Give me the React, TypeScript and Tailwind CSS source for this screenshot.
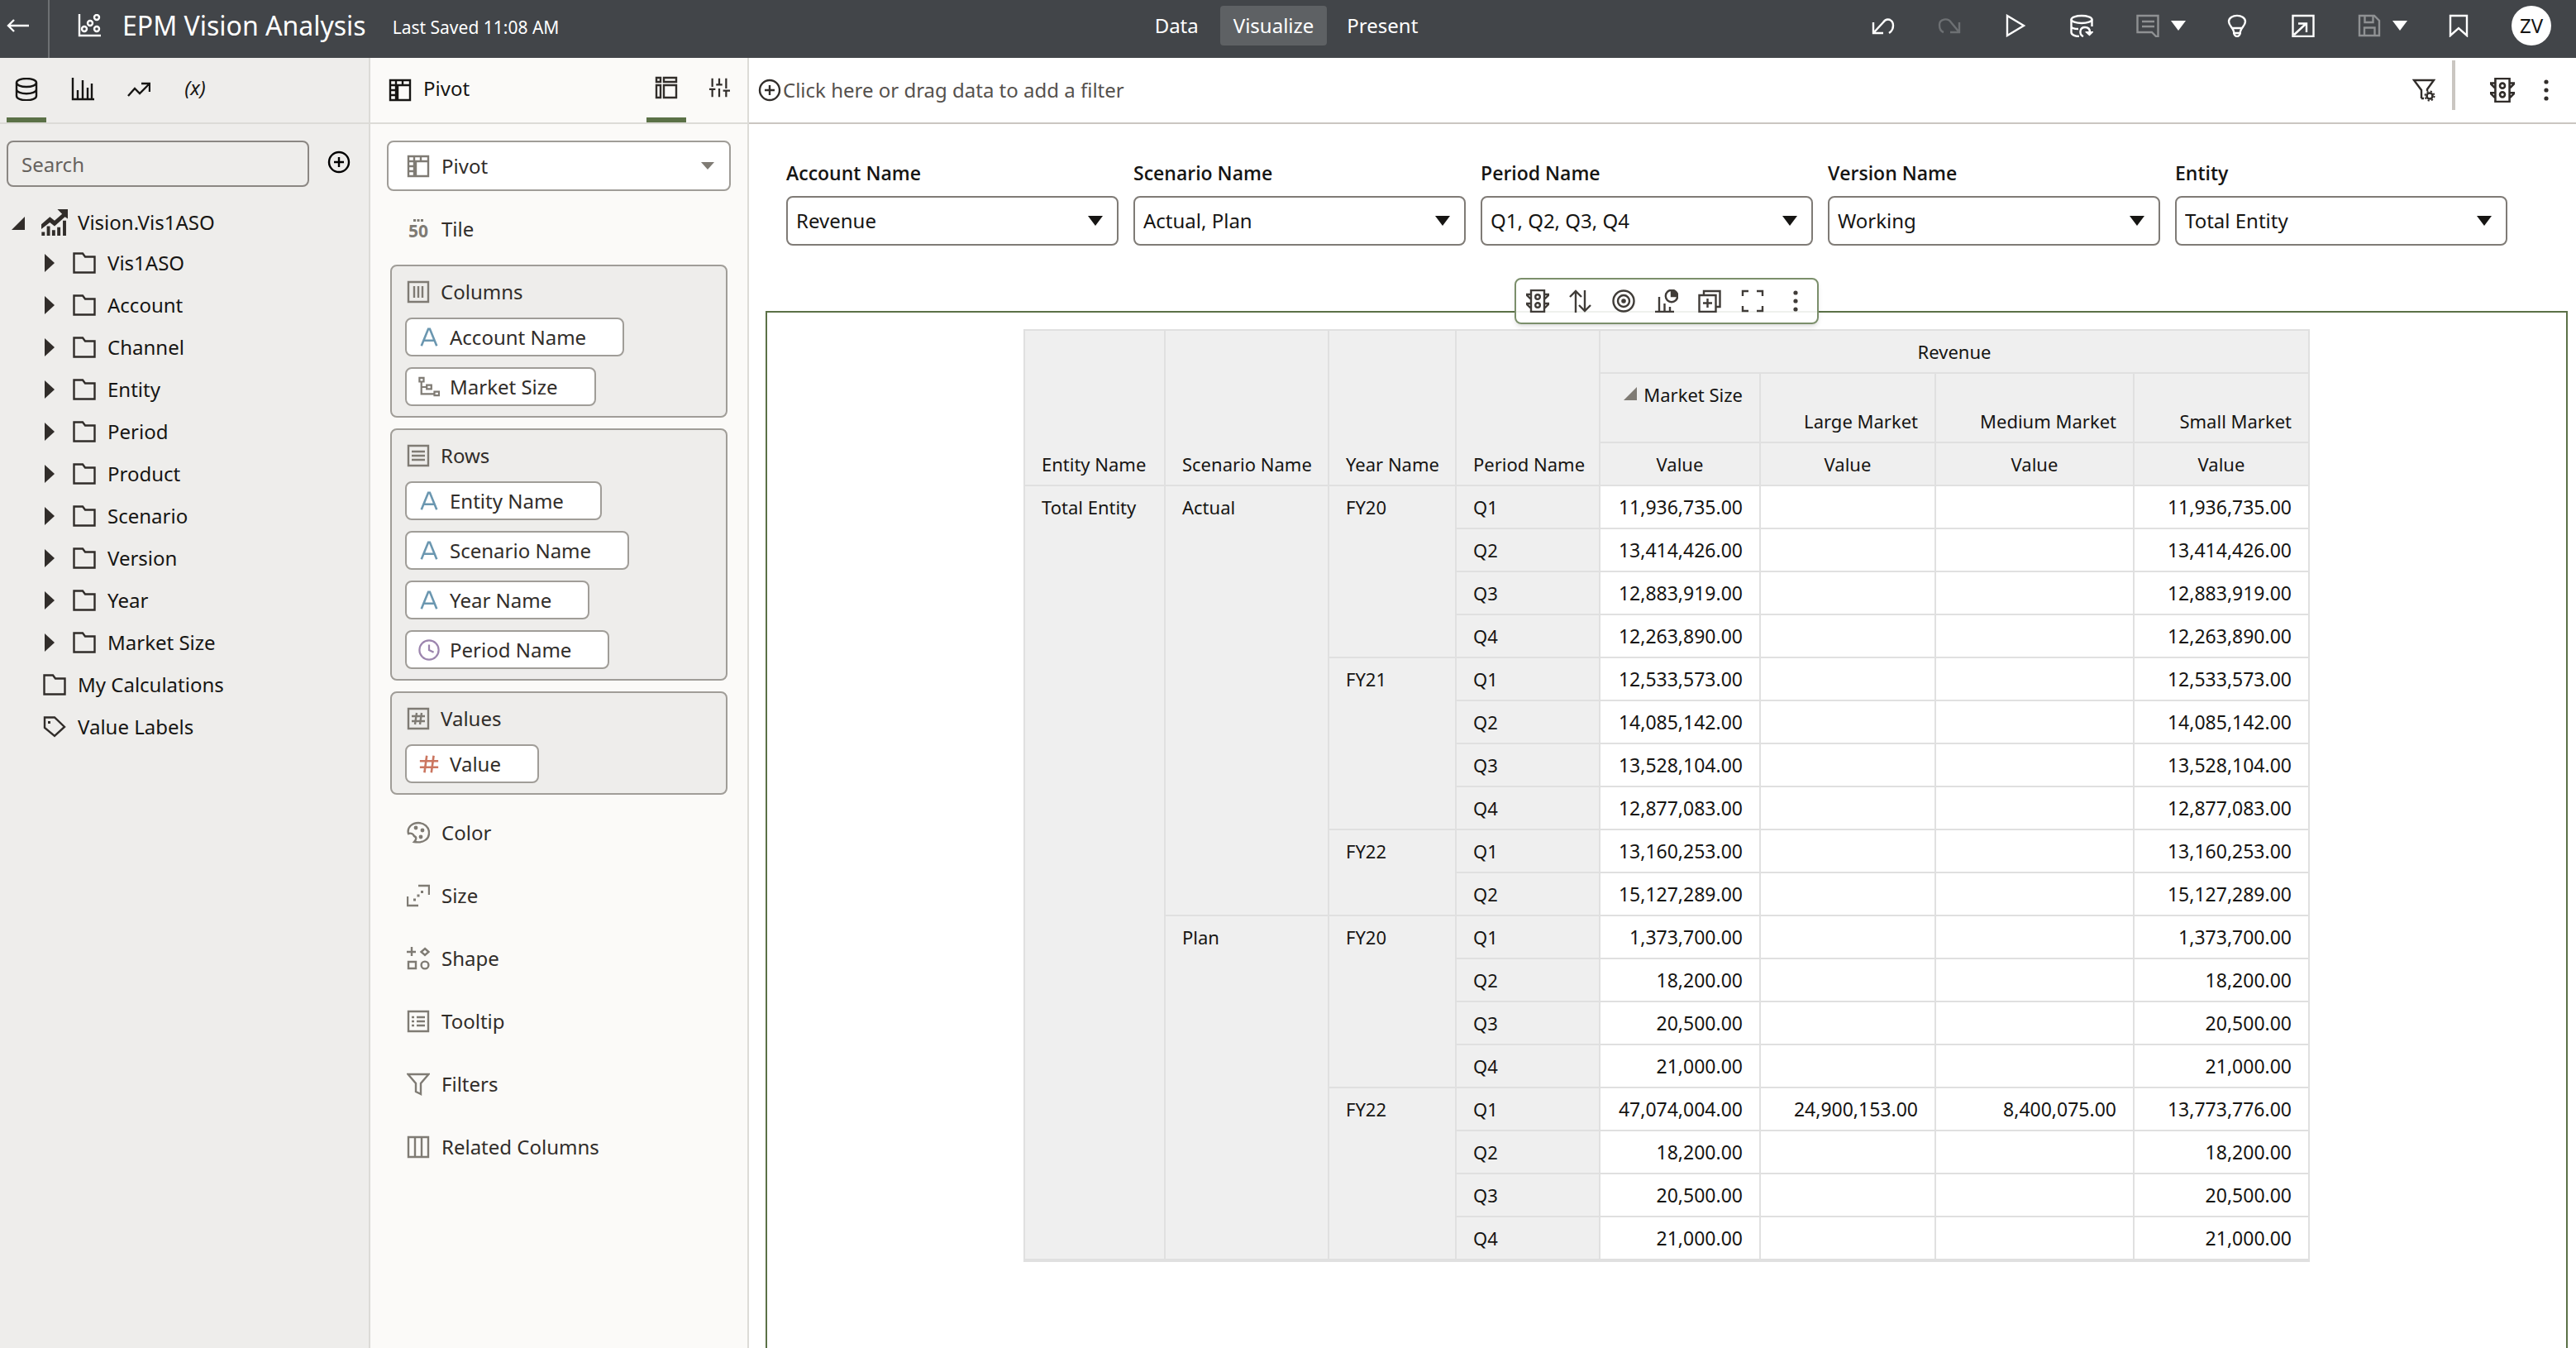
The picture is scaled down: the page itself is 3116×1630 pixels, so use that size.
import type { ReactNode } from "react";

type IconProps = { children: ReactNode; className?: string; size?: number };

function Icon({ children, className = "", size = 28 }: IconProps) {
  return (
    <svg
      width={size}
      height={size}
      viewBox="0 0 28 28"
      fill="none"
      stroke="currentColor"
      strokeWidth="2.4"
      className={`shrink-0 ${className}`}
      aria-hidden="true"
    >
      {children}
    </svg>
  );
}

const icons = {
  back: <path d="M27 14H2M9 7L2 14L9 21" />,
  scatter: (
    <>
      <path d="M2 0V26H28" />
      <circle cx="8" cy="18" r="3" />
      <circle cx="15" cy="11" r="3" />
      <circle cx="23" cy="4" r="3" />
      <circle cx="23" cy="18" r="3" />
    </>
  ),
  undo: <path d="M2 10V23H14M2 23L14 10C18 4 26 6 26 14C26 18 24 21 21 23" />,
  redo: <path d="M26 10V22H15M26 22L16 10C12 4 2 6 2 13C2 18 4 21 7 22" />,
  play: <path d="M4 2L24 14L4 26Z" />,
  refreshData: (
    <>
      <ellipse cx="14" cy="6.500" rx="12.500" ry="4.500" />
      <path d="M1.500 6.500V22C1.500 25 6 27 11 27M26.500 6.500V15M1.500 15C2 17 6 18 10 18" />
      <path d="M16 27C11 25 11 16 18 16C22 16 24 18 24 22" />
      <path d="M18.500 21H28V22L23.500 26.500L18.500 22Z" fill="currentColor" stroke="none" />
    </>
  ),
  comment: <path d="M1.500 2H26.500V27H24L19 22H1.500ZM7 9H22M7 15H22" />,
  bulb: (
    <path d="M10 21C9 16 4 14 4 9C4 -0.500 24 -0.500 24 9C24 14 19 16 18 21C18 29 10 29 10 21ZM7.500 17H20.500M9 23H19" />
  ),
  open: <path d="M1.500 2H26.500V27H1.500ZM3 25L17 12M8 11.500H18V22" />,
  save: <path d="M2 2H20L26 8V26H2ZM8.500 2V10H18.500V2M8 26V16.500H20.500V26" />,
  bookmark: <path d="M4 2H24V26L14 17L4 26Z" />,
  database: (
    <>
      <ellipse cx="14" cy="6" rx="12" ry="5" />
      <path d="M2 6V22C2 29 26 29 26 22V6M2 14C2 21 26 21 26 14" />
    </>
  ),
  bars: <path d="M2 0V26H28M8 26V15M14 26V3M20 26V12M25 26V7" />,
  trend: <path d="M1 22L9 13L15 19L26 8M17 7H27V17" />,
  pivot: (
    <path d="M2 2H26V26H2ZM9 2V26M2 8H26M17 2V8M2 14H9M2 20H9M11 9V26" />
  ),
  grammar: <path d="M2 2H7V7H2ZM11 2H26V7H11ZM2 11H7V26H2ZM11 11H26V26H11Z" />,
  sliders: (
    <path d="M5 2V13M5 17V26M1 16H9M14 2V9M14 15V26M10 10H18M23 2V15M23 19V26M19 18H28" />
  ),
  addCircle: (
    <>
      <circle cx="14" cy="14" r="12" />
      <path d="M14 8V20M8 14H20" />
    </>
  ),
  folder: <path d="M1.500 2.500H12L15 6.500H26.500V25.500H1.500Z" />,
  tag: (
    <>
      <path d="M2 2.500H14L26 14L14 25L2 15Z" />
      <rect x="6" y="7" width="3" height="3" fill="currentColor" stroke="none" />
    </>
  ),
  cube: (
    <>
      <path d="M0 16L9 8L14 12L22 5L17 0H28V10L25 8L14 18L9 14L0 21Z" fill="currentColor" stroke="none" />
      <path d="M2 28V24M7.500 28V18M13 28V22M18.500 28V19M24.500 28V12" strokeWidth="3.400" />
    </>
  ),
  columns: <path d="M2 2H26V26H2ZM9 7V21M14 7V21M19 7V21" />,
  rows: <path d="M2 2H26V26H2ZM6 9H22M6 14H22M6 19H22" />,
  values: <path d="M2 2H26V26H2ZM12 7L10 21M18 7L16 21M6 11H22M6 17H22" />,
  attribute: <path d="M4 25L13 3H15L24 25M7 18H21" strokeWidth="2.800" />,
  hierarchy: (
    <path d="M1.500 2H7V7H1.500ZM11 11.500H17V16.500H11ZM21 20H27V25H21ZM4 7V23H21M4 14H11" />
  ),
  clock: (
    <>
      <circle cx="14" cy="14" r="12.500" />
      <path d="M14 7V14L20 17" />
    </>
  ),
  hash: <path d="M11 3L8 25M20 3L17 25M2 10H26M2 18H26" strokeWidth="2.800" />,
  palette: (
    <>
      <path d="M2 15C0 7 7 2 14 2C21 2 27 7 27 14C27 21 21 27 9 25C12 22 12 19 9 18C8 15 5 14 2 15Z" />
      <g fill="currentColor" stroke="none">
        <circle cx="11" cy="8" r="2.400" />
        <circle cx="19" cy="11" r="2.400" />
        <circle cx="17" cy="19" r="2.400" />
      </g>
    </>
  ),
  size: (
    <>
      <path d="M14 2H27V13M1 15V26H14" />
      <path d="M8 19H11M12.500 14H15.500M17 9.500H20" strokeWidth="2.800" />
    </>
  ),
  shape: (
    <>
      <path d="M6 0V11M0 6H11M2 18H11V26H2ZM22 2L26.500 6L22 10L17.500 6Z" />
      <circle cx="22" cy="22" r="4.400" />
    </>
  ),
  tooltip: <path d="M2 2H26V26H2ZM6 9H9M12 9H22M6 14H9M12 14H22M6 19H9M12 19H22" />,
  filter: <path d="M1.500 2H26.500L17 13V26L11 23V13Z" />,
  related: <path d="M2 2H26V26H2ZM10 2V26M18 2V26" />,
  filterGear: (
    <>
      <path d="M11 24V14L2 2H26L18 13V15M11 24H14" />
      <circle cx="21" cy="21" r="3.500" strokeWidth="2.600" />
      <circle cx="21" cy="21" r="5.600" strokeDasharray="2.200 2.200" strokeWidth="1.800" />
    </>
  ),
  traffic: (
    <>
      <path d="M6 1H22V27H6ZM6 12L1 7V6H6M22 12L27 7V6H22M6 23L1 18V17H6M22 23L27 18V17H22" />
      <circle cx="14" cy="9" r="2.800" />
      <circle cx="14" cy="19" r="2.800" />
    </>
  ),
  more: (
    <g fill="currentColor" stroke="none">
      <circle cx="14" cy="4" r="2.600" />
      <circle cx="14" cy="14" r="2.600" />
      <circle cx="14" cy="24" r="2.600" />
    </g>
  ),
  sort: <path d="M8 28V3M1 9L8 2L15 9M19 1V26M12 19L19 26L26 19" />,
  target: (
    <>
      <circle cx="14" cy="14" r="12.500" />
      <circle cx="14" cy="14" r="7" />
      <circle cx="14" cy="14" r="2.800" fill="currentColor" stroke="none" />
    </>
  ),
  explain: (
    <>
      <path d="M0 27H23M5 27V9M11.500 27V17M18 27V21" />
      <circle cx="20" cy="8" r="7.200" />
      <path d="M20 8V1C24 1 27 4 27 8Z" fill="currentColor" />
    </>
  ),
  duplicate: <path d="M1.500 7H21.500V27H1.500ZM7 7V2H26.500V21H21.500M11.500 11V22M6 16.500H17" />,
  expand: <path d="M2 8V2H9M19 2H26V8M26 20V26H19M9 26H2V20" />,
};

type IconName = keyof typeof icons;

const dimensions = [
  "Vis1ASO",
  "Account",
  "Channel",
  "Entity",
  "Period",
  "Product",
  "Scenario",
  "Version",
  "Year",
  "Market Size",
];

type Chip = { label: string; icon: IconName; color: string };

const dropZones: { title: string; icon: IconName; chips: Chip[] }[] = [
  {
    title: "Columns",
    icon: "columns",
    chips: [
      { label: "Account Name", icon: "attribute", color: "text-[#6b97b0]" },
      { label: "Market Size", icon: "hierarchy", color: "text-[#7f7b74]" },
    ],
  },
  {
    title: "Rows",
    icon: "rows",
    chips: [
      { label: "Entity Name", icon: "attribute", color: "text-[#6b97b0]" },
      { label: "Scenario Name", icon: "attribute", color: "text-[#6b97b0]" },
      { label: "Year Name", icon: "attribute", color: "text-[#6b97b0]" },
      { label: "Period Name", icon: "clock", color: "text-[#9c85ae]" },
    ],
  },
  {
    title: "Values",
    icon: "values",
    chips: [{ label: "Value", icon: "hash", color: "text-[#cb7660]" }],
  },
];

const grammarItems: { label: string; icon: IconName }[] = [
  { label: "Color", icon: "palette" },
  { label: "Size", icon: "size" },
  { label: "Shape", icon: "shape" },
  { label: "Tooltip", icon: "tooltip" },
  { label: "Filters", icon: "filter" },
  { label: "Related Columns", icon: "related" },
];

const dashboardFilters = [
  { id: "account", label: "Account Name", value: "Revenue" },
  { id: "scenario", label: "Scenario Name", value: "Actual, Plan" },
  { id: "period", label: "Period Name", value: "Q1, Q2, Q3, Q4" },
  { id: "version", label: "Version Name", value: "Working" },
  { id: "entity", label: "Entity", value: "Total Entity" },
];

const vizTools: { label: string; icon: IconName }[] = [
  { label: "Conditional formatting", icon: "traffic" },
  { label: "Sort", icon: "sort" },
  { label: "Use as filter", icon: "target" },
  { label: "Change visualization", icon: "explain" },
  { label: "Duplicate", icon: "duplicate" },
  { label: "Maximize", icon: "expand" },
  { label: "Menu", icon: "more" },
];

type Row = {
  scenario?: { name: string; span: number };
  year?: { name: string; span: number };
  period: string;
  values: [string, string, string, string];
};

const small = (v: string): [string, string, string, string] => [v, "", "", v];

const rows: Row[] = [
  { scenario: { name: "Actual", span: 10 }, year: { name: "FY20", span: 4 }, period: "Q1", values: small("11,936,735.00") },
  { period: "Q2", values: small("13,414,426.00") },
  { period: "Q3", values: small("12,883,919.00") },
  { period: "Q4", values: small("12,263,890.00") },
  { year: { name: "FY21", span: 4 }, period: "Q1", values: small("12,533,573.00") },
  { period: "Q2", values: small("14,085,142.00") },
  { period: "Q3", values: small("13,528,104.00") },
  { period: "Q4", values: small("12,877,083.00") },
  { year: { name: "FY22", span: 2 }, period: "Q1", values: small("13,160,253.00") },
  { period: "Q2", values: small("15,127,289.00") },
  { scenario: { name: "Plan", span: 8 }, year: { name: "FY20", span: 4 }, period: "Q1", values: small("1,373,700.00") },
  { period: "Q2", values: small("18,200.00") },
  { period: "Q3", values: small("20,500.00") },
  { period: "Q4", values: small("21,000.00") },
  {
    year: { name: "FY22", span: 4 },
    period: "Q1",
    values: ["47,074,004.00", "24,900,153.00", "8,400,075.00", "13,773,776.00"],
  },
  { period: "Q2", values: small("18,200.00") },
  { period: "Q3", values: small("20,500.00") },
  { period: "Q4", values: small("21,000.00") },
];

function IconButton({
  icon,
  label,
  className = "",
  size,
  disabled,
}: {
  icon: IconName;
  label: string;
  className?: string;
  size?: number;
  disabled?: boolean;
}) {
  return (
    <button type="button" aria-label={label} disabled={disabled} className={`flex items-center justify-center ${className}`}>
      <Icon size={size}>{icons[icon]}</Icon>
    </button>
  );
}

function Caret({ className = "" }: { className?: string }) {
  return (
    <svg width="18" height="12" viewBox="0 0 18 12" fill="currentColor" className={className} aria-hidden="true">
      <path d="M0 0H18L9 12Z" />
    </svg>
  );
}

function Header() {
  return (
    <header className="flex h-[70px] shrink-0 items-center justify-between bg-[#424549] text-white">
      <div className="flex flex-1 items-center self-stretch">
        <div className="flex w-[60px] items-center self-stretch border-r-2 border-[#6d7073] pb-2 pl-2">
          <IconButton icon="back" label="Go back" />
        </div>
        <Icon className="ml-[34px] -mt-2">{icons.scatter}</Icon>
        <h1 className="ml-[26px] pb-2 text-[32px] leading-10">EPM Vision Analysis</h1>
        <span className="ml-8 pb-1 text-[21px] leading-8">Last Saved 11:08 AM</span>
      </div>
      <nav className="flex items-center pb-2 pl-6 text-2xl">
        <button type="button" className="px-[26px] py-2">Data</button>
        <button type="button" className="rounded bg-[#5e6164] px-4 py-2">Visualize</button>
        <button type="button" className="px-6 py-2">Present</button>
      </nav>
      <div className="flex flex-1 items-center justify-end pr-[30px] pb-2">
        <div className="flex items-center gap-[52px]">
          <IconButton icon="undo" label="Undo" />
          <IconButton icon="redo" label="Redo" className="text-[#6d7073]" disabled />
          <IconButton icon="play" label="Preview" />
          <IconButton icon="refreshData" label="Refresh data" />
          <div className="flex w-7 items-center gap-[14px]">
            <IconButton icon="comment" label="Notes" className="text-[#8f9193]" />
            <button type="button" aria-label="Notes options">
              <Caret />
            </button>
          </div>
          <div className="w-7" />
        </div>
        <div className="flex items-center gap-[52px]">
          <IconButton icon="bulb" label="Insights" />
          <IconButton icon="open" label="Export" />
          <div className="flex w-7 items-center gap-[14px]">
            <IconButton icon="save" label="Save" className="text-[#8f9193]" />
            <button type="button" aria-label="Save options">
              <Caret />
            </button>
          </div>
        </div>
        <IconButton icon="bookmark" label="Bookmark" className="ml-20" />
        <button type="button" className="ml-[50px] flex size-12 items-center justify-center rounded-full bg-white text-2xl text-[#161513]">
          ZV
        </button>
      </div>
    </header>
  );
}

function TreeToggle({ open }: { open?: boolean }) {
  return (
    <svg width="16" height="22" viewBox="0 0 16 22" fill="#312d2a" aria-hidden="true">
      <path d={open ? "M16 4V20H0Z" : "M2 0L14 11L2 22Z"} />
    </svg>
  );
}

function DataPanel() {
  return (
    <aside className="flex w-[448px] shrink-0 flex-col border-r-2 border-[#dcdbd7] bg-[#eeedeb]">
      <div className="flex h-20 items-stretch gap-5 border-b-2 border-[#dcdbd7] pl-2 text-[#161513]">
        <IconButton icon="database" label="Data" className="w-12 border-b-[6px] border-[#5b7147] pt-1" />
        <IconButton icon="bars" label="Visualizations" className="w-12 border-b-[6px] border-transparent pt-1" />
        <IconButton icon="trend" label="Analytics" className="w-12 border-b-[6px] border-transparent pt-1" />
        <button type="button" aria-label="Parameters" className="w-12 border-b-[6px] border-transparent text-2xl italic">
          (x)
        </button>
      </div>
      <div className="flex items-center gap-[22px] px-2 pt-5">
        <input
          type="search"
          aria-label="Search"
          placeholder="Search"
          className="h-14 w-[366px] rounded-lg border-2 border-[#8b8783] bg-transparent px-4 text-2xl placeholder:text-[#66625e]"
        />
        <IconButton icon="addCircle" label="Add" className="pb-1" />
      </div>
      <ul className="pt-5 text-2xl text-[#161513]">
        <li>
          <button type="button" aria-expanded="true" className="flex h-[46px] items-center pl-[14px]">
            <TreeToggle open />
            <Icon className="ml-5 text-[#312d2a]" size={32}>{icons.cube}</Icon>
            <span className="ml-3">Vision.Vis1ASO</span>
          </button>
          <ul>
            {dimensions.map((name) => (
              <li key={name}>
                <button type="button" aria-expanded="false" className="flex h-[51px] items-center pl-[52px]">
                  <TreeToggle />
                  <Icon className="ml-5 text-[#312d2a]">{icons.folder}</Icon>
                  <span className="ml-[14px]">{name}</span>
                </button>
              </li>
            ))}
          </ul>
        </li>
        <li>
          <button type="button" className="flex h-[51px] items-center pl-[52px]">
            <Icon className="text-[#312d2a]">{icons.folder}</Icon>
            <span className="ml-[14px]">My Calculations</span>
          </button>
        </li>
        <li>
          <button type="button" className="flex h-[51px] items-center pl-[52px]">
            <Icon className="text-[#312d2a]">{icons.tag}</Icon>
            <span className="ml-[14px]">Value Labels</span>
          </button>
        </li>
      </ul>
    </aside>
  );
}

function GrammarPanel() {
  return (
    <aside className="flex w-[458px] shrink-0 flex-col border-r-2 border-[#dcdbd7] bg-[#fbfaf8] text-2xl text-[#312d2a]">
      <div className="flex h-20 items-stretch border-b-2 border-[#dcdbd7] pl-[22px]">
        <div className="flex flex-1 items-center gap-[14px] text-[#161513]">
          <Icon>{icons.pivot}</Icon>
          <h2 className="pb-1">Pivot</h2>
        </div>
        <IconButton icon="grammar" label="Grammar" className="w-12 border-b-[6px] border-[#5b7147]" />
        <IconButton icon="sliders" label="Properties" className="ml-4 mr-[10px] w-12 border-b-[6px] border-transparent" size={26} />
      </div>
      <div className="px-5 pt-5">
        <div className="relative flex items-center">
          <select
            aria-label="Visualization type"
            className="h-[61px] w-full appearance-none rounded-lg border-2 border-[#a09d98] bg-white pl-16"
          >
            <option>Pivot</option>
          </select>
          <Icon className="pointer-events-none absolute left-6 text-[#7f7b74]">{icons.pivot}</Icon>
          <svg
            width="16"
            height="9"
            viewBox="0 0 16 9"
            fill="#7f7b74"
            className="pointer-events-none absolute right-5"
            aria-hidden="true"
          >
            <path d="M0 0H16L8 9Z" />
          </svg>
        </div>
        <button type="button" className="mt-2 flex h-[76px] items-center gap-[14px] pl-6">
          <span className="flex w-7 flex-col items-center text-[21px] leading-5 font-bold text-[#7f7b74]">
            <svg width="12" height="4" viewBox="0 0 12 4" fill="currentColor" aria-hidden="true">
              <path d="M0 0H3V3H0ZM4.500 0H7.500V3H4.500ZM9 0H12V3H9Z" />
            </svg>
            50
          </span>
          <span>Tile</span>
        </button>
      </div>
      <div className="mt-[5px] flex flex-col gap-[13px] px-6">
        {dropZones.map((zone) => (
          <section key={zone.title} className="rounded-lg border-2 border-[#a09d98] bg-[#eeedeb] px-4 pb-3">
            <h3 className="flex h-[62px] items-center gap-[13px] pl-[2px]">
              <Icon className="text-[#7f7b74]">{icons[zone.icon]}</Icon>
              {zone.title}
            </h3>
            <div className="flex flex-col items-start gap-[13px]">
              {zone.chips.map((chip) => (
                <button
                  key={chip.label}
                  type="button"
                  className="flex h-[47px] items-center gap-3 rounded-lg border-2 border-[#a09d98] bg-white pr-11 pl-[14px]"
                >
                  <Icon className={chip.color} size={26}>{icons[chip.icon]}</Icon>
                  {chip.label}
                </button>
              ))}
            </div>
          </section>
        ))}
      </div>
      <ul className="px-5 pt-2">
        {grammarItems.map((item) => (
          <li key={item.label}>
            <button type="button" className="flex h-[76px] items-center gap-[14px] pl-6">
              <Icon className="text-[#7f7b74]">{icons[item.icon]}</Icon>
              {item.label}
            </button>
          </li>
        ))}
      </ul>
    </aside>
  );
}

const line = "border-r-2 border-b-2 border-[#e0e0e0]";
const head = `${line} bg-[#efefef] px-5 font-normal`;

function PivotTable() {
  return (
    <table className="w-[1556px] table-fixed border-separate border-spacing-0 border-t-2 border-b-2 border-l-2 border-[#e0e0e0] text-[22px] leading-[50px] whitespace-nowrap text-[#161513]">
      <colgroup>
        <col className="w-[170px]" />
        <col className="w-[198px]" />
        <col className="w-[154px]" />
        <col className="w-[174px]" />
        <col className="w-[194px]" />
        <col className="w-[212px]" />
        <col className="w-[240px]" />
        <col className="w-[212px]" />
      </colgroup>
      <thead>
        <tr>
          {["Entity Name", "Scenario Name", "Year Name", "Period Name"].map((name) => (
            <th key={name} rowSpan={3} scope="col" className={`${head} text-left align-bottom`}>
              {name}
            </th>
          ))}
          <th colSpan={4} scope="colgroup" className={head}>
            Revenue
          </th>
        </tr>
        <tr className="h-[84px]">
          <th scope="col" className={`${head} text-right align-top`}>
            <svg width="16" height="16" viewBox="0 0 16 16" fill="#7f7b74" className="mr-2 mb-2 inline-block" aria-hidden="true">
              <path d="M16 0V16H0Z" />
            </svg>
            Market Size
          </th>
          {["Large Market", "Medium Market", "Small Market"].map((name) => (
            <th key={name} scope="col" className={`${head} text-right align-bottom`}>
              {name}
            </th>
          ))}
        </tr>
        <tr>
          {[0, 1, 2, 3].map((i) => (
            <th key={i} scope="col" className={head}>
              Value
            </th>
          ))}
        </tr>
      </thead>
      <tbody>
        {rows.map((row, i) => (
          <tr key={i} className="h-[52px]">
            {i === 0 && (
              <th rowSpan={rows.length} scope="rowgroup" className={`${head} text-left align-top`}>
                Total Entity
              </th>
            )}
            {row.scenario && (
              <th rowSpan={row.scenario.span} scope="rowgroup" className={`${head} text-left align-top`}>
                {row.scenario.name}
              </th>
            )}
            {row.year && (
              <th rowSpan={row.year.span} scope="rowgroup" className={`${head} text-left align-top`}>
                {row.year.name}
              </th>
            )}
            <th scope="row" className={`${head} text-left`}>
              {row.period}
            </th>
            {row.values.map((value, j) => (
              <td key={j} className={`${line} bg-white px-5 text-right text-[23px] leading-[50px]`}>
                {value}
              </td>
            ))}
          </tr>
        ))}
      </tbody>
    </table>
  );
}

function Canvas() {
  return (
    <main className="flex min-w-0 flex-1 flex-col bg-white">
      <div className="flex h-20 shrink-0 items-center justify-between border-b-2 border-[#cac6c1] pl-[11px]">
        <button type="button" className="flex items-center gap-[2px] text-2xl text-[#55514d]">
          <Icon className="text-[#312d2a]">{icons.addCircle}</Icon>
          Click here or drag data to add a filter
        </button>
        <div className="flex items-center pr-[22px] text-[#312d2a]">
          <IconButton icon="filterGear" label="Filter options" />
          <div className="mr-[42px] mb-3 ml-5 h-[60px] w-1 bg-[#cac6c1]" />
          <IconButton icon="traffic" label="Conditional formatting" size={30} />
          <IconButton icon="more" label="Menu" className="ml-6" />
        </div>
      </div>

      {/* Dashboard filters */}
      <div className="flex gap-[18px] pt-[41px] pr-[83px] pl-[45px] text-[#161513]">
        {dashboardFilters.map((filter) => (
          <div key={filter.id} className="flex-1">
            <label htmlFor={filter.id} className="block pb-[10px] font-['Open_Sans',sans-serif] text-[23px] leading-9 font-semibold">
              {filter.label}
            </label>
            <div className="relative flex items-center">
              <select
                id={filter.id}
                className="h-[60px] w-full appearance-none rounded-lg border-2 border-[#7f7b76] bg-white pl-[10px] text-2xl"
              >
                <option>{filter.value}</option>
              </select>
              <Caret className="pointer-events-none absolute right-[19px]" />
            </div>
          </div>
        ))}
      </div>

      {/* Selected visualization */}
      <div className="relative mt-[79px] mr-[10px] ml-5 flex flex-1 justify-center border-x-2 border-t-2 border-[#5b7147] pt-5">
        <div className="absolute -top-[42px] left-1/2 flex h-14 -translate-x-1/2 items-center rounded-lg border-2 border-[#7b8f6b] bg-white/90 text-[#403c38] shadow-md">
          {vizTools.map((tool) => (
            <IconButton key={tool.label} icon={tool.icon} label={tool.label} className="w-[52px]" />
          ))}
        </div>
        <div>
          <PivotTable />
        </div>
      </div>
    </main>
  );
}

export default function App() {
  return (
    <div className="flex h-screen flex-col overflow-hidden font-['Noto_Sans',sans-serif]">
      <Header />
      <div className="flex min-h-0 flex-1">
        <DataPanel />
        <GrammarPanel />
        <Canvas />
      </div>
    </div>
  );
}
